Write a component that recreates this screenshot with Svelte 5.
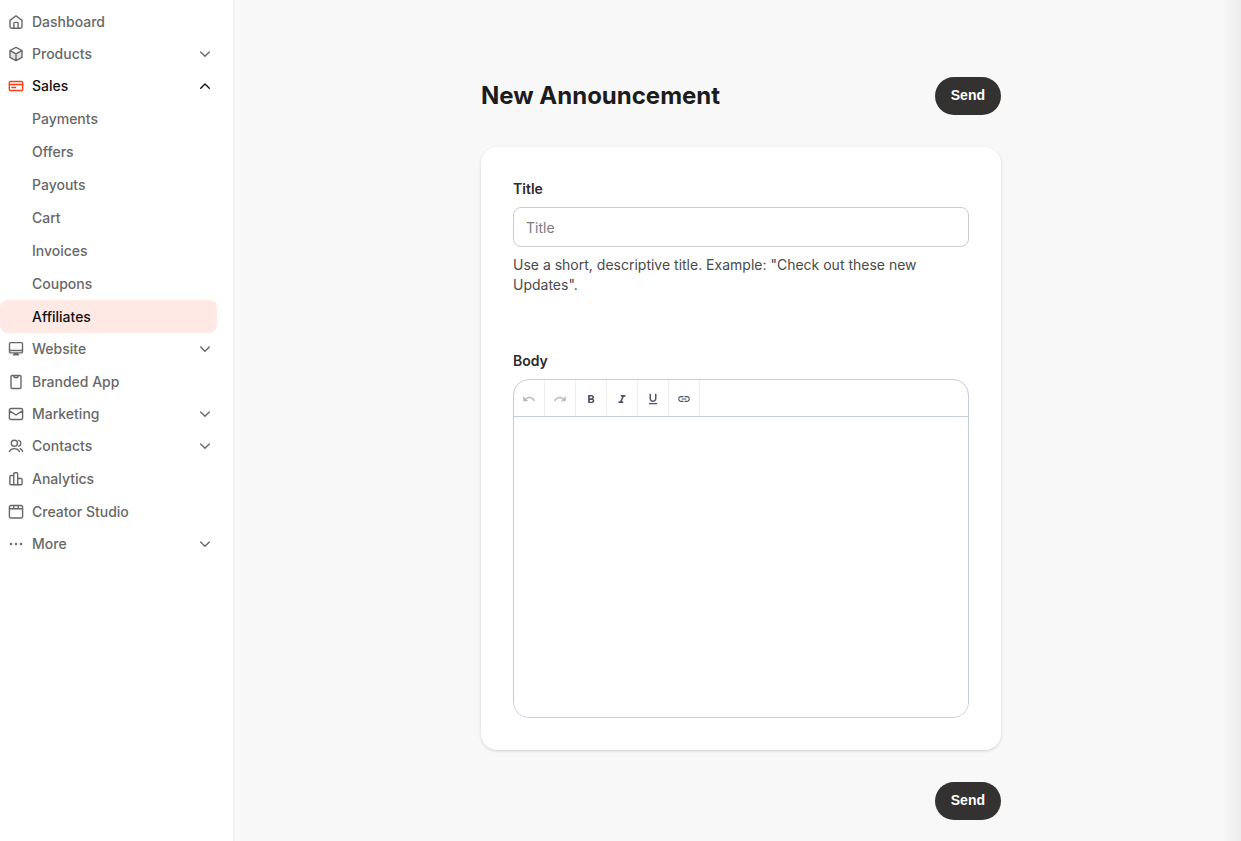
<script>
  const nav = [
    { label: 'Dashboard', icon: 'home' },
    { label: 'Products', icon: 'box', group: true },
    {
      label: 'Sales',
      icon: 'card',
      group: true,
      children: ['Payments', 'Offers', 'Payouts', 'Cart', 'Invoices', 'Coupons', 'Affiliates'],
    },
    { label: 'Website', icon: 'monitor', group: true },
    { label: 'Branded App', icon: 'phone' },
    { label: 'Marketing', icon: 'mail', group: true },
    { label: 'Contacts', icon: 'people', group: true },
    { label: 'Analytics', icon: 'bars' },
    { label: 'Creator Studio', icon: 'window' },
    { label: 'More', icon: 'dots', group: true },
  ];

  // 16x16 stroke paths
  const icons = {
    home: 'M2 6.4 8 1.7l6 4.7v6.2a1.6 1.6 0 0 1-1.6 1.6H3.6A1.6 1.6 0 0 1 2 12.6zM5.9 14V9.2a.8.8 0 0 1 .8-.8h2.6a.8.8 0 0 1 .8.8V14',
    box: 'M8 1.4 14 4.5v6.9L8 14.6 2 11.4V4.5zM2.2 4.7 8 7.8l5.8-3.1M8 7.8v6.6',
    card: 'M2.5 3.5h11a1.2 1.2 0 0 1 1.2 1.2v6.600a1.2 1.2 0 0 1-1.2 1.2h-11a1.2 1.2 0 0 1-1.2-1.2V4.7a1.2 1.2 0 0 1 1.2-1.2zM1.3 6.5h13.4M4 9.5h3.5',
    monitor: 'M2.7 1.6h10.600a1.2 1.2 0 0 1 1.2 1.2v7.900a1.2 1.2 0 0 1-1.2 1.2H2.7a1.2 1.2 0 0 1-1.2-1.2V2.8a1.2 1.2 0 0 1 1.2-1.2zM1.5 9.5h13M5.5 13.800h5M6.5 12.800h3',
    phone: 'M4.2 1.5h7.6a1.2 1.2 0 0 1 1.2 1.2v10.6a1.2 1.2 0 0 1-1.2 1.2H4.2A1.2 1.2 0 0 1 3 13.3V2.7a1.2 1.2 0 0 1 1.2-1.2zM6 1.7v1a.8.8 0 0 0 .8.8h2.4a.8.8 0 0 0 .8-.8v-1',
    mail: 'M2.9 2.5h10.2a1.5 1.5 0 0 1 1.5 1.5v8a1.5 1.5 0 0 1-1.5 1.5H2.9A1.5 1.5 0 0 1 1.4 12V4a1.5 1.5 0 0 1 1.5-1.5zM1.6 4.8 8 9l6.4-4.2',
    people: 'M9.5 5.3a3.1 3.1 0 1 1-6.2 0 3.1 3.1 0 0 1 6.2 0zM1.4 13.6c.8-1.9 2.6-3 5-3s4.2 1.1 5 3M10.6 2.3a3.1 3.1 0 0 1 .2 5.9M12.2 10.7c1.1.6 1.9 1.6 2.4 2.9',
    bars: 'M5.8 13.5V2.7a1 1 0 0 1 1-1h1.9a1 1 0 0 1 1 1v10.8M5.8 4.5H2.9a1 1 0 0 0-1 1v7.2a1 1 0 0 0 1 1h10.2a1 1 0 0 0 1-1V8.5a1 1 0 0 0-1-1H9.7',
    window: 'M2.9 1.5h10.2a1.5 1.5 0 0 1 1.5 1.5v9.5a1.5 1.5 0 0 1-1.5 1.5H2.9a1.5 1.5 0 0 1-1.5-1.5V3a1.5 1.5 0 0 1 1.5-1.5zM1.4 4.7h13.2M5.7 1.7v3M10.3 1.7v3',
    dots: 'M3 8h.01M8 8h.01M13 8h.01',
  };

  let open = $state('Sales');
  let current = $state('Affiliates');
  let title = $state('');

  function toggle(label) {
    open = open === label ? '' : label;
  }

  function format(command) {
    document.execCommand(command);
  }
</script>

{#snippet navIcon(name)}
  <svg class="nav-icon" class:dots={name === 'dots'} viewBox="0 0 16 16" aria-hidden="true">
    {#if name === 'box'}
      <path class="tint" d="M2 4.5 8 7.8l6-3.3v6.9l-6 3.2-6-3.2z" />
    {/if}
    <path d={icons[name]} />
  </svg>
{/snippet}

<div class="layout">
  <nav class="sidebar" aria-label="Main">
    {#each nav as item}
      {#if item.group}
        <button
          class="row group"
          class:open={open === item.label}
          aria-expanded={open === item.label}
          onclick={() => toggle(item.label)}
        >
          {@render navIcon(item.icon)}
          <span>{item.label}</span>
          <svg class="chevron" viewBox="0 0 12 12" aria-hidden="true">
            <path d={open === item.label ? 'M1.7 8.2 6 4l4.3 4.2' : 'M1.7 4 6 8.2 10.3 4'} />
          </svg>
        </button>
      {:else}
        <a class="row" href="#{item.icon}">
          {@render navIcon(item.icon)}
          <span>{item.label}</span>
        </a>
      {/if}
      {#if item.children && open === item.label}
        {#each item.children as child}
          <a
            class="row sub"
            class:current={current === child}
            href="#{child.toLowerCase()}"
            onclick={() => (current = child)}>{child}</a>
        {/each}
      {/if}
    {/each}
  </nav>

  <main class="content">
    <form class="column" onsubmit={(e) => e.preventDefault()}>
      <header class="page-head">
        <h1>New Announcement</h1>
        <button class="send" type="submit">Send</button>
      </header>

      <section class="card">
        <label class="label" for="title">Title</label>
        <input id="title" type="text" placeholder="Title" aria-describedby="title-hint" bind:value={title} />
        <p class="hint" id="title-hint">
          Use a short, descriptive title. Example: "Check out these new Updates".
        </p>

        <label class="label" for="body">Body</label>
        <div class="editor">
          <div class="toolbar" role="toolbar" aria-label="Formatting">
            <button type="button" disabled aria-label="Undo">
              <svg viewBox="0 0 24 24"><path d="M12.5 8c-2.65 0-5.05.99-6.9 2.6L2 7v9h9l-3.62-3.62c1.39-1.16 3.16-1.88 5.12-1.88 3.54 0 6.55 2.31 7.6 5.5l2.37-.78C21.08 11.03 17.15 8 12.5 8z" /></svg>
            </button>
            <button type="button" disabled aria-label="Redo">
              <svg viewBox="0 0 24 24"><path d="M18.4 10.6C16.55 8.99 14.15 8 11.5 8c-4.65 0-8.58 3.03-9.96 7.22L3.9 16c1.05-3.19 4.05-5.5 7.6-5.5 1.95 0 3.73.72 5.12 1.88L13 16h9V7l-3.6 3.6z" /></svg>
            </button>
            <button type="button" aria-label="Bold" onclick={() => format('bold')}>
              <svg viewBox="0 0 24 24"><path d="M15.6 11.79c.97-.67 1.65-1.77 1.65-2.79 0-2.26-1.75-4-4-4H7v14h7.04c2.09 0 3.71-1.7 3.71-3.79 0-1.52-.86-2.82-2.15-3.42zM10 7.5h3c.83 0 1.5.67 1.5 1.5s-.67 1.5-1.5 1.5h-3v-3zm3.5 9H10v-3h3.5c.83 0 1.5.67 1.5 1.5s-.67 1.5-1.5 1.5z" /></svg>
            </button>
            <button type="button" aria-label="Italic" onclick={() => format('italic')}>
              <svg viewBox="0 0 24 24"><path d="M10 5v3h2.21l-3.42 8H6v3h8v-3h-2.21l3.42-8H18V5z" /></svg>
            </button>
            <button type="button" aria-label="Underline" onclick={() => format('underline')}>
              <svg viewBox="0 0 24 24"><path d="M12 17c3.31 0 6-2.69 6-6V3h-2.5v8c0 1.93-1.57 3.5-3.5 3.5S8.5 12.93 8.5 11V3H6v8c0 3.31 2.69 6 6 6zm-7 2v2h14v-2H5z" /></svg>
            </button>
            <button type="button" aria-label="Link">
              <svg viewBox="0 0 24 24"><path d="M3.9 12c0-1.71 1.39-3.1 3.1-3.1h4V7H7c-2.76 0-5 2.24-5 5s2.24 5 5 5h4v-1.9H7c-1.71 0-3.1-1.39-3.1-3.1zM8 13h8v-2H8v2zm9-6h-4v1.9h4c1.71 0 3.1 1.39 3.1 3.1s-1.39 3.1-3.1 3.1h-4V17h4c2.76 0 5-2.24 5-5s-2.24-5-5-5z" /></svg>
            </button>
          </div>
          <textarea id="body"></textarea>
        </div>
      </section>

      <footer class="page-foot">
        <button class="send" type="submit">Send</button>
      </footer>
    </form>
  </main>
</div>

<style>
  :global(body) {
    background: #f8f8f8;
    font-family: Inter, 'Liberation Sans', sans-serif;
    font-size: 14px;
    line-height: 20px;
    color: #1c1c1c;
  }
  button,
  input,
  textarea {
    font: inherit;
    color: inherit;
    margin: 0;
    box-sizing: border-box;
  }
  button {
    border: 0;
    background: none;
    cursor: pointer;
  }

  .layout {
    display: flex;
    min-height: 100vh;
  }

  .sidebar {
    flex: 0 0 234px;
    box-sizing: border-box;
    padding: 5px 16px 16px 0;
    background: #fff;
    border-right: 1px solid #ededed;
  }
  .row {
    display: flex;
    align-items: center;
    gap: 8px;
    width: 100%;
    height: 33px;
    box-sizing: border-box;
    padding: 0 6px 0 8px;
    border-radius: 8px;
    color: #686868;
    font-weight: 500;
    text-align: left;
    text-decoration: none;
  }
  .row.group { height: 32px; }
  .row.open { color: #111; }
  .row.open .nav-icon { color: #ff3e15; }
  .row.sub { padding-left: 32px; }
  .row.current {
    color: #111;
    background: #ffe9e4;
  }

  .nav-icon {
    width: 16px;
    height: 16px;
    flex-shrink: 0;
  }
  .nav-icon path,
  .chevron path {
    fill: none;
    stroke: currentColor;
    stroke-width: 1.4;
    stroke-linecap: round;
    stroke-linejoin: round;
  }
  .nav-icon .tint {
    fill: #e6e6e6;
    stroke: none;
  }
  .nav-icon.dots path { stroke-width: 2.4; }
  .chevron {
    width: 12px;
    height: 12px;
    margin-left: auto;
  }

  .content {
    flex: 1;
    min-width: 0;
    padding: 77px 0 21px 7px;
    background: linear-gradient(to left, #ececec, #f8f8f8 18px);
  }
  .column {
    max-width: 520px;
    margin: 0 auto;
  }
  .page-head {
    display: flex;
    justify-content: space-between;
    align-items: center;
    margin-bottom: 32px;
  }
  h1 {
    margin: 0;
    font-size: 24px;
    line-height: 32px;
    font-weight: 700;
  }
  .page-foot {
    display: flex;
    justify-content: flex-end;
    margin-top: 32px;
  }
  .send {
    height: 38px;
    padding: 0 16px 3px;
    border-radius: 19px;
    background: #343231;
    color: #fff;
    font-family: 'Liberation Sans', sans-serif;
    font-weight: 700;
  }

  .card {
    padding: 32px;
    border-radius: 16px;
    background: #fff;
    box-shadow: 0 1px 3px rgba(0, 0, 0, 0.16);
  }
  .label {
    display: block;
    margin-bottom: 8px;
    font-weight: 600;
    color: #2b2b2b;
  }
  input {
    width: 100%;
    height: 40px;
    padding: 0 12px;
    border: 1px solid #ccc;
    border-radius: 8px;
    background: #fff;
  }
  input::placeholder {
    color: #7c7c7c;
    opacity: 1;
  }
  .hint {
    margin: 8px 0 56px;
    color: #4a4a4a;
  }

  .editor {
    overflow: hidden;
    border: 1px solid #c4cdd8;
    border-radius: 16px;
  }
  .toolbar {
    display: flex;
    height: 36px;
    border-bottom: 1px solid #c4cdd8;
  }
  .toolbar button {
    display: flex;
    align-items: center;
    justify-content: center;
    width: 31px;
    padding: 2px 0 0;
    border-right: 1px solid #eee;
    color: #485566;
  }
  .toolbar button:disabled {
    color: #b9bdc2;
    cursor: default;
  }
  .toolbar svg {
    width: 14px;
    height: 14px;
    fill: currentColor;
  }
  textarea {
    display: block;
    width: 100%;
    height: 300px;
    padding: 12px;
    border: 0;
    outline: 0;
    resize: none;
    background: #fff;
  }
</style>
